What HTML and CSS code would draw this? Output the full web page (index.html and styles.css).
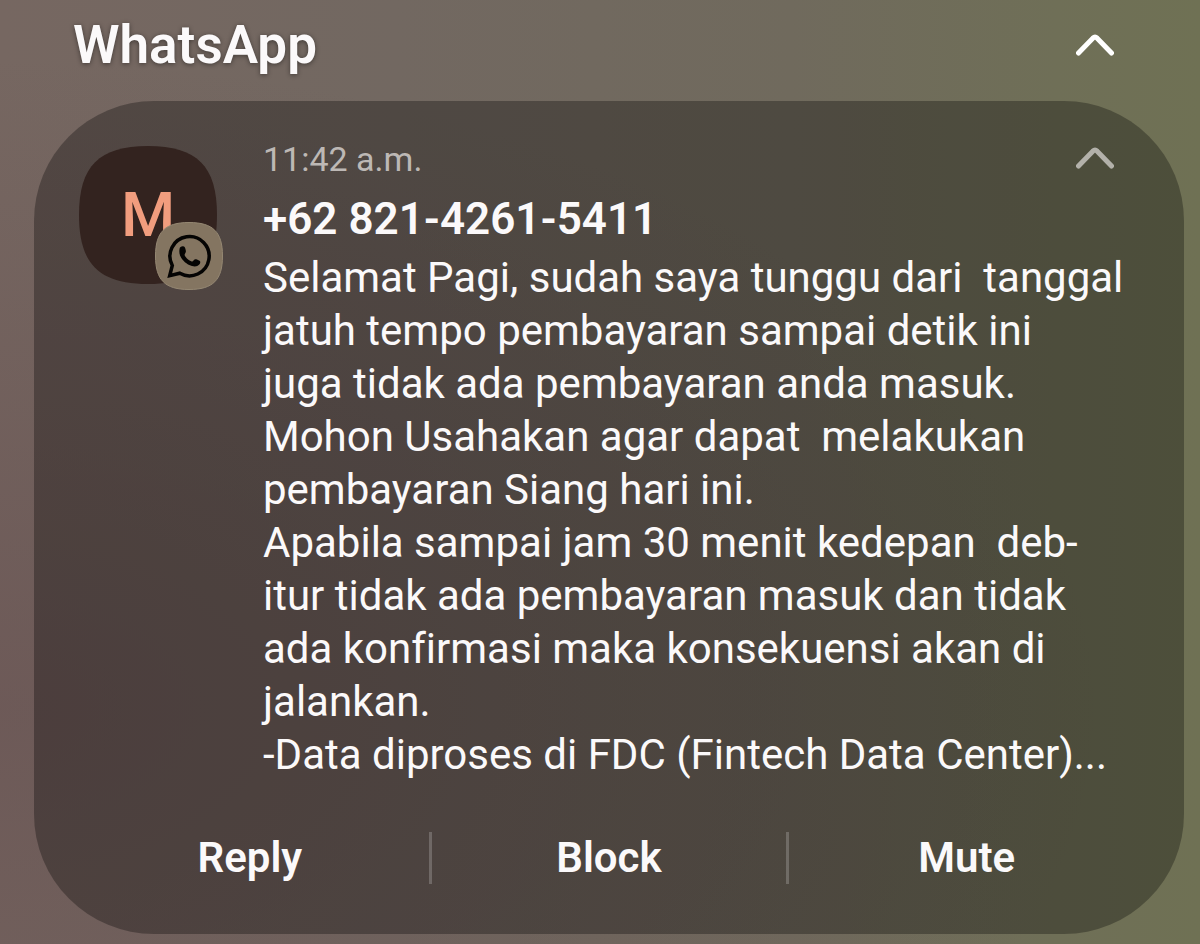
FILE: index.html
```html
<!DOCTYPE html>
<html lang="id">
<head>
<meta charset="utf-8">
<meta name="viewport" content="width=device-width, initial-scale=1">
<title>WhatsApp</title>
<link rel="stylesheet" href="styles.css">
</head>
<body>
<main class="panel">
  <header class="group-header">
    <h1 class="app-name">WhatsApp</h1>
    <button class="chevron" type="button" aria-label="Collapse group">
      <svg viewBox="0 0 38 22" aria-hidden="true"><path d="M2.5 19 L16.8 4.2 Q19 2.2 21.2 4.2 L35.5 19"/></svg>
    </button>
  </header>
  <article class="card">
    <div class="content">
      <div class="avatar">
        <svg class="avatar-shape" viewBox="0 0 138 138" aria-hidden="true"><path d="M69 0C118 0 138 20 138 69S118 138 69 138 0 118 0 69 20 0 69 0Z"/></svg>
        <span class="initial">M</span>
        <svg class="badge" viewBox="0 0 68 68" aria-hidden="true">
          <path class="badge-bg" d="M34 .5C58 .5 67.5 10 67.5 34S58 67.5 34 67.5.5 58 .5 34 10 .5 34 .5Z"/>
          <path class="bubble" d="M14.700 53.700 L17.300 43.500 A19.600 19.600 0 1 1 24.800 51.200 Z"/>
          <path class="phone" d="M24.500 27.300C24.700 25 26.300 24.200 28 24.300C29.500 24.400 30 25.400 30.500 27.200C31 29 31.200 30 30.100 31.500C29.300 32.600 29.500 33.300 30.500 34.700C32 36.700 34 38.300 36.200 39.200C37.300 39.700 37.900 39.300 38.700 38.200C39.700 37 40.600 37 42 37.600L44.500 38.800C45.700 39.500 45.400 41.200 44.300 42.600C42.600 44.600 39.800 45 37 44.100C31.300 42.300 27.700 38.800 25.400 34.300C24.200 31.800 24.200 29.200 24.500 27.300Z"/>
        </svg>
      </div>
      <div class="message">
        <time class="time" datetime="11:42">11:42 a.m.</time>
        <h2 class="sender">+62 821-4261-5411</h2>
        <p class="text">Selamat Pagi, sudah saya tunggu dari  tanggal
jatuh tempo pembayaran sampai detik ini
juga tidak ada pembayaran anda masuk.
Mohon Usahakan agar dapat  melakukan
pembayaran Siang hari ini.
Apabila sampai jam 30 menit kedepan  deb-
itur tidak ada pembayaran masuk dan tidak
ada konfirmasi maka konsekuensi akan di
jalankan.
-Data diproses di FDC (Fintech Data Center)...</p>
      </div>
      <button class="chevron chevron-dim" type="button" aria-label="Collapse notification">
        <svg viewBox="0 0 38 22" aria-hidden="true"><path d="M2.5 19 L16.8 4.2 Q19 2.2 21.2 4.2 L35.5 19"/></svg>
      </button>
    </div>
    <footer class="actions">
      <button class="action" type="button">Reply</button>
      <button class="action" type="button">Block</button>
      <button class="action" type="button">Mute</button>
    </footer>
  </article>
</main>
</body>
</html>
```
FILE: styles.css
```css
* {
  box-sizing: border-box;
}

body {
  margin: 0;
  min-height: 100vh;
  color: #fbf9fa;
  font-family: Roboto, "Noto Sans", sans-serif;
  font-variant-ligatures: none;
  background:
    radial-gradient(ellipse at 0% 75%, rgba(100, 76, 78, 0.5), rgba(100, 76, 78, 0) 65%),
    linear-gradient(to right, #766761 0%, #726861 33%, #706a5d 66%, #6f6f57 88%, #6f7154 100%);
}

.panel {
  padding: 0 16px 10px 34px;
}

.group-header {
  display: flex;
  align-items: center;
  justify-content: space-between;
  height: 101px;
  padding: 0 70px 12px 39px;
}

.app-name {
  margin: 0;
  font-size: 53px;
  font-weight: 600;
  line-height: 60px;
  text-shadow: 0 1px 5px rgba(0, 0, 0, 0.45);
}

.chevron {
  flex: none;
  width: 38px;
  padding: 0;
  border: 0;
  background: none;
  color: #fff;
}

.chevron svg {
  display: block;
  width: 38px;
  height: 22px;
  fill: none;
  stroke: currentColor;
  stroke-width: 5;
  stroke-linecap: round;
}

.chevron-dim {
  align-self: flex-start;
  margin-top: 8px;
  color: #b3b1aa;
}

.card {
  padding: 38px 70px 50px 45px;
  border-radius: 120px;
  background: rgba(0, 0, 0, 0.3);
}

.content {
  display: flex;
  align-items: flex-start;
}

.avatar {
  position: relative;
  display: flex;
  flex: none;
  align-items: center;
  justify-content: center;
  width: 138px;
  height: 138px;
  margin: 7px 46px 0 0;
}

.avatar-shape {
  position: absolute;
  inset: 0;
  fill: #33231f;
}

.initial {
  position: relative;
  color: #f19d7e;
  font-size: 62px;
  font-weight: 500;
  line-height: 62px;
}

.badge {
  position: absolute;
  right: -6px;
  bottom: -6px;
  width: 68px;
  height: 68px;
}

.badge-bg {
  fill: #847561;
  stroke: #958873;
  stroke-width: 1;
}

.bubble {
  fill: none;
  stroke: #050403;
  stroke-width: 3.5;
  stroke-linejoin: miter;
}

.phone {
  fill: #050403;
}

.message {
  flex: 1;
  min-width: 0;
}

.time {
  display: block;
  color: #bdb8b5;
  font-size: 34px;
  line-height: 40px;
}

.sender {
  margin: 8px 0 0;
  font-size: 44px;
  font-weight: 600;
  line-height: 64px;
}

.text {
  margin: 0;
  font-size: 42px;
  line-height: 53px;
  white-space: pre;
}

.actions {
  display: grid;
  grid-template-columns: repeat(3, 1fr);
  margin: 51px -30px 0 -8px;
}

.action {
  height: 52px;
  padding: 0;
  border: 0;
  background: none;
  color: inherit;
  font: 600 42px/52px Roboto, "Noto Sans", sans-serif;
}

.action + .action {
  border-left: 3px solid rgba(255, 255, 255, 0.2);
}
```
